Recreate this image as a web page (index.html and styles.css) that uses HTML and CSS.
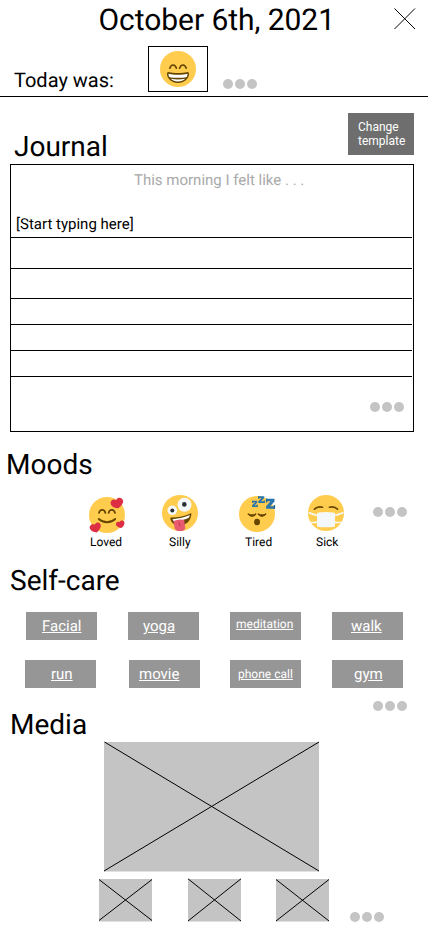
FILE: index.html
```html
<!DOCTYPE html>
<html lang="en">
<head>
<meta charset="utf-8">
<title>Daily journal</title>
<link rel="stylesheet" href="styles.css">
</head>
<body>
<main class="screen">
  <header class="header">
    <div class="title-row">
      <h1 class="title">October 6th, 2021</h1>
      <svg class="close" width="22" height="22" viewBox="0 0 22 22"><path d="M.5.5l20.500 20.500M21 .5L.5 21" stroke="#000" fill="none"/></svg>
    </div>
    <div class="today-row">
      <span class="today">Today was:</span>
      <div class="mood-box">
        <svg class="emoji" viewBox="0 0 36 36">
          <circle cx="18" cy="18" r="18" fill="#ffcc4d"/>
          <path d="M9.800 17.200c1.200-4.300 5.400-4.300 6.600 0M19.600 17.200c1.200-4.300 5.400-4.300 6.600 0" fill="none" stroke="#664500" stroke-width="1.600" stroke-linecap="round"/>
          <path d="M8.500 21c-1.300 0-1.500 1-1.500 2 0 4.500 4.800 9 11 9s11-4.500 11-9c0-1-.2-2-1.500-2-3 .8-5.800 1-9.500 1s-6.500-.2-9.500-1z" fill="#664500"/>
          <path d="M8.500 22.700c3 .8 6 1.100 9.500 1.100s6.500-.3 9.500-1.100c.1 1.300-.3 2.300-.8 3.200-5 1.200-12.400 1.200-17.400 0-.5-.9-.9-1.900-.8-3.200zM10.700 27.700c4.700.9 9.900.9 14.600 0-1.900 1.800-4.500 2.700-7.300 2.700s-5.400-.9-7.300-2.700z" fill="#fff"/>
        </svg>
      </div>
      <div class="dots"><i></i><i></i><i></i></div>
    </div>
  </header>

  <section class="journal">
    <div class="journal-head">
      <h2>Journal</h2>
      <button class="template">Change<br>template</button>
    </div>
    <div class="paper">
      <p class="prompt">This morning I felt like . . .</p>
      <p class="entry">[Start typing here]</p>
      <div class="rule tall"></div>
      <div class="rule medium"></div>
      <div class="rule"></div>
      <div class="rule"></div>
      <div class="rule"></div>
      <div class="dots"><i></i><i></i><i></i></div>
    </div>
  </section>

  <section class="moods">
    <h2>Moods</h2>
    <div class="mood-row">
      <div class="mood loved">
        <svg class="emoji" viewBox="0 0 36 36">
          <circle cx="18" cy="18" r="18" fill="#ffcc4d"/>
          <path d="M10 16c.8-4.200 5.600-4.200 6.400 0M19.600 16c.8-4.200 5.600-4.200 6.400 0" fill="none" stroke="#664500" stroke-width="1.700" stroke-linecap="round"/>
          <path d="M9.800 22c4.500 4.300 11.900 4.300 16.400 0" fill="none" stroke="#664500" stroke-width="1.900" stroke-linecap="round"/>
          <path d="M34 3.200c-.7-1.900-2.800-2.900-4.700-2.200-1.100.4-1.800 1.200-2.200 2.200-1-.7-2.200-.8-3.300-.4-1.900.7-2.700 2.800-1.900 4.700 1.100 2.500 4 3.700 7.500 3.700 2.900-2.400 5.300-5.100 4.600-8z" fill="#dd2e44"/>
          <path d="M11.500 27.300c-.8-1.600-2.700-2.200-4.300-1.400-.7.400-1.200 1-1.500 1.700-.9-.5-2-.6-3-.1-1.900.9-2.500 2.900-1.600 4.600 1.200 2.100 3.700 3.200 6.600 3.500 2.500-2.200 4.900-5.500 3.800-8.300zM35.300 25c-.7-1.300-2.200-1.800-3.400-1.200-.7.300-1.100.8-1.300 1.400-.7-.5-1.500-.6-2.200-.3-1.400.6-1.800 2.100-1.200 3.400.8 1.500 2.700 2.500 5.200 2.800 2-1.700 3.700-4 2.900-6.100z" fill="#dd2e44"/>
        </svg>
        <span>Loved</span>
      </div>
      <div class="mood silly">
        <svg class="emoji" viewBox="0 0 36 36">
          <circle cx="18" cy="18" r="18" fill="#ffcc4d"/>
          <circle cx="22.500" cy="9.700" r="7" fill="#f5f8fa"/><circle cx="10.300" cy="15.300" r="4.800" fill="#f5f8fa"/>
          <circle cx="22.300" cy="9.400" r="2.300" fill="#292f33"/><circle cx="10.300" cy="15.400" r="2" fill="#292f33"/>
          <path d="M28.300 18.400c-5.200 2.500-11.700 4-18.800 4.100-1 0-1.400.7-1.100 1.600 1.300 4.300 4.900 7.400 10.400 6.500 6-.9 9.900-4.900 10.600-11.300.1-.8-.4-1.200-1.100-.9z" fill="#664500"/>
          <path d="M27.900 20.100c-4.900 2.200-11 3.700-17.400 4.100.4 1 .9 1.600 1.500 2.100 6.200-.5 11.600-1.900 14.800-3.600.5-.8.800-1.600 1.100-2.600z" fill="#fff"/>
          <path d="M11.500 26.300c2.900-1.800 8-2.600 10.700-1.200l1 7.300c.4 4.500-9.400 5.100-10.500.8z" fill="#e75a70"/><path d="M16.800 27l1.200 4.500" stroke="#be3648" fill="none" stroke-width=".8"/>
        </svg>
        <span>Silly</span>
      </div>
      <div class="mood tired">
        <svg class="emoji" viewBox="0 0 36 36">
          <circle cx="18" cy="18" r="18" fill="#ffcc4d"/>
          <ellipse cx="18" cy="26" rx="3" ry="3.200" fill="#664500"/>
          <path d="M9.300 18.200c2 3.300 5.400 3.300 7.400 0M19.300 18.200c2 3.300 5.400 3.300 7.400 0" fill="#664500"/><path d="M9.300 18c2 2.500 5.400 2.500 7.400 0M19.300 18c2 2.500 5.400 2.500 7.400 0" fill="none" stroke="#664500" stroke-width="1.400" stroke-linecap="round"/>
          <path d="M13.300 4.700h5v1.700l-2.800 3.100h3V11h-5.400V9.300L16 6.200h-2.700zM19.300.2h5.900v1.900l-3.100 3.200h3.500V7h-6.300V5.200L22.400 2h-3.100zM27 2.700h8.500v2.700l-4.300 4.800H36v2.600h-8.900v-2.600l4.400-4.900H27z" fill="#2874ad"/>
          <path d="M13.200 4.700h1v2.400h-1zM17.500 8.400h1.100V11h-1.100zM19.200.2h1v2.700h-1zM24.700 4.200h1V7h-1zM26.900 2.700h1.400v3.700h-1.400zM34.700 9h1.400v3.800h-1.400z" fill="#226699"/>
        </svg>
        <span>Tired</span>
      </div>
      <div class="mood sick">
        <svg class="emoji" viewBox="0 0 36 36">
          <circle cx="18" cy="18" r="18" fill="#ffcc4d"/>
          <path d="M6.500 14.200c2-2.100 5.500-2.700 8-2M29.500 14.200c-2-2.100-5.500-2.700-8-2" fill="none" stroke="#664500" stroke-width="1.700" stroke-linecap="round"/>
          <path d="M.5 17.500C4 19 7 20 9.500 20.500M35.500 17.500C32 19 29 20 26.500 20.500M2.500 27.300c2.500.4 5 .3 7.500-.2M33.500 27.300c-2.500.4-5 .3-7.500-.2" fill="none" stroke="#f5f8fa" stroke-width="1.600"/>
          <path d="M10.500 17.500c5-.7 10-.7 15 0 1 .2 1.500.8 1.500 1.700v11c0 1-.5 1.600-1.500 1.700-5 .5-10 .5-15 0-1-.1-1.500-.7-1.500-1.700v-11c0-.9.500-1.500 1.500-1.700z" fill="#f5f8fa"/>
        </svg>
        <span>Sick</span>
      </div>
      <div class="dots"><i></i><i></i><i></i></div>
    </div>
  </section>

  <section class="care">
    <h2>Self-care</h2>
    <div class="chips first">
      <a class="chip facial">Facial</a><a class="chip yoga">yoga</a><a class="chip small meditation">meditation</a><a class="chip walk">walk</a>
    </div>
    <div class="chips second">
      <a class="chip run">run</a><a class="chip movie">movie</a><a class="chip small phone">phone call</a><a class="chip gym">gym</a>
    </div>
  </section>

  <section class="media">
    <div class="media-head">
      <h2>Media</h2>
      <div class="dots"><i></i><i></i><i></i></div>
    </div>
    <svg class="hero" width="215" height="129.500" viewBox="0 0 215 129.500"><path d="M0 0h215v129.500H0z" fill="#c4c4c4"/><path d="M.5 0L215 129M215 0L0 129" stroke="#000"/></svg>
    <div class="thumb-row">
      <svg class="thumb" viewBox="0 0 53 42.500"><path d="M0 0h53v42.500H0z" fill="#c4c4c4"/><path d="M0 .5L53 41.500M53 .5L0 41.500" stroke="#000"/></svg>
      <svg class="thumb second-thumb" viewBox="0 0 53 42.500"><path d="M0 0h53v42.500H0z" fill="#c4c4c4"/><path d="M0-.2L53 42M53-.2L0 42" stroke="#000"/></svg>
      <svg class="thumb third-thumb" viewBox="0 0 53 42.500"><path d="M0 0h53v42.500H0z" fill="#c4c4c4"/><path d="M0 .5L53 42M53 .5L0 42" stroke="#000"/></svg>
      <div class="dots"><i></i><i></i><i></i></div>
    </div>
  </section>
</main>
</body>
</html>
```
FILE: styles.css
```css
* { box-sizing: border-box; }
body { margin: 0; background: #fff; color: #000; font-family: Roboto, sans-serif; text-rendering: geometricPrecision; }
h1, h2, p { margin: 0; font-weight: 400; }
h2 { font-size: 28px; line-height: 35px; }
svg { display: block; overflow: visible; flex: none; }
.screen { width: 428px; height: 926px; overflow: hidden; }

.dots { display: flex; gap: 2px; flex: none; }
.dots i { width: 10px; height: 10px; border-radius: 50%; background: #c4c4c4; }
.emoji { width: 36px; height: 36px; }

.header { height: 97px; border-bottom: 1px solid #000; }
.title-row { display: flex; height: 46px; padding: 3px 12px 0 98.5px; justify-content: space-between; }
.title { font-size: 30px; line-height: 35px; letter-spacing: -.05px; white-space: nowrap; }
.close { margin-top: 5px; }
.today-row { display: flex; height: 46px; padding-left: 14px; }
.today { width: 134px; padding-top: 22px; font-size: 20px; line-height: 24px; }
.mood-box { width: 60px; height: 46px; border: 1px solid #000; padding: 4px 11px; }
.today-row .dots { margin: 33px 0 0 15px; }

.journal { height: 335px; padding: 16px 14px 0 10px; }
.journal-head { display: flex; justify-content: space-between; height: 51px; padding-left: 4px; }
.journal-head h2 { padding-top: 16px; }
.template { width: 66px; height: 42px; border: 0; padding: 0 0 0 10px; background: #6e6e6e; color: #fff; font: 12px/14px Roboto, sans-serif; text-align: left; }
.paper { height: 268px; border: 1px solid #000; padding-right: 1px; }
.prompt { height: 42px; padding: 6px 0 0 123px; font-size: 15px; line-height: 18px; color: #a9a9a9; }
.entry { height: 31px; padding: 8px 0 0 5px; font-size: 15px; line-height: 18px; border-bottom: 1px solid #000; }
.rule { height: 26px; border-bottom: 1px solid #000; }
.rule.tall { height: 31px; }
.rule.medium { height: 30px; }
.paper .dots { margin: 25px 0 0 359px; }

.moods { height: 121px; padding: 15px 0 0 6px; }
.mood-row { display: flex; padding: 13px 0 0 83px; }
.mood { display: flex; flex-direction: column; justify-content: space-between; height: 54px; flex: none; }
.mood span { font-size: 12px; line-height: 14px; }
.loved { width: 73px; padding-top: 2px; }
.silly { width: 77px; }
.tired { width: 69px; padding-top: 1px; }
.sick { width: 65px; }
.loved span { padding-left: 1px; }
.silly span { padding-left: 7px; }
.tired span { padding-left: 6px; }
.sick span { padding-left: 8px; }
.mood-row .dots { margin-top: 12px; }

.care { height: 135px; padding: 10px 0 0 10px; }
.chips { display: flex; }
.chips.first { margin-top: 14px; padding-left: 16px; gap: 31px; }
.chips.second { margin-top: 20px; padding-left: 15px; gap: 31px; }
.chip { width: 71px; height: 28px; flex: none; background: #969696; color: #fff; font-size: 15px; line-height: 28px; white-space: nowrap; text-decoration: underline; }
.chip.small { font-size: 12px; }
.facial { padding-left: 16px; }
.yoga { padding-left: 15px; }
.chip.meditation { padding-left: 6px; line-height: 24px; }
.walk { padding-left: 19px; }
.run { padding-left: 26px; margin-right: 2px; }
.movie { padding-left: 10px; margin-right: -1px; }
.phone { padding-left: 8px; }
.gym { padding-left: 22px; }

.media-head { display: flex; justify-content: space-between; height: 54px; padding: 13px 21px 0 10px; }
.media-head h2 { padding-top: 6px; }
.hero { margin-left: 104px; }
.thumb-row { display: flex; padding: 7.5px 0 0 99px; }
.thumb { width: 53px; height: 42.5px; }
.second-thumb { margin-left: 36px; }
.third-thumb { margin-left: 35px; }
.thumb-row .dots { margin: 33px 0 0 21px; }
```
